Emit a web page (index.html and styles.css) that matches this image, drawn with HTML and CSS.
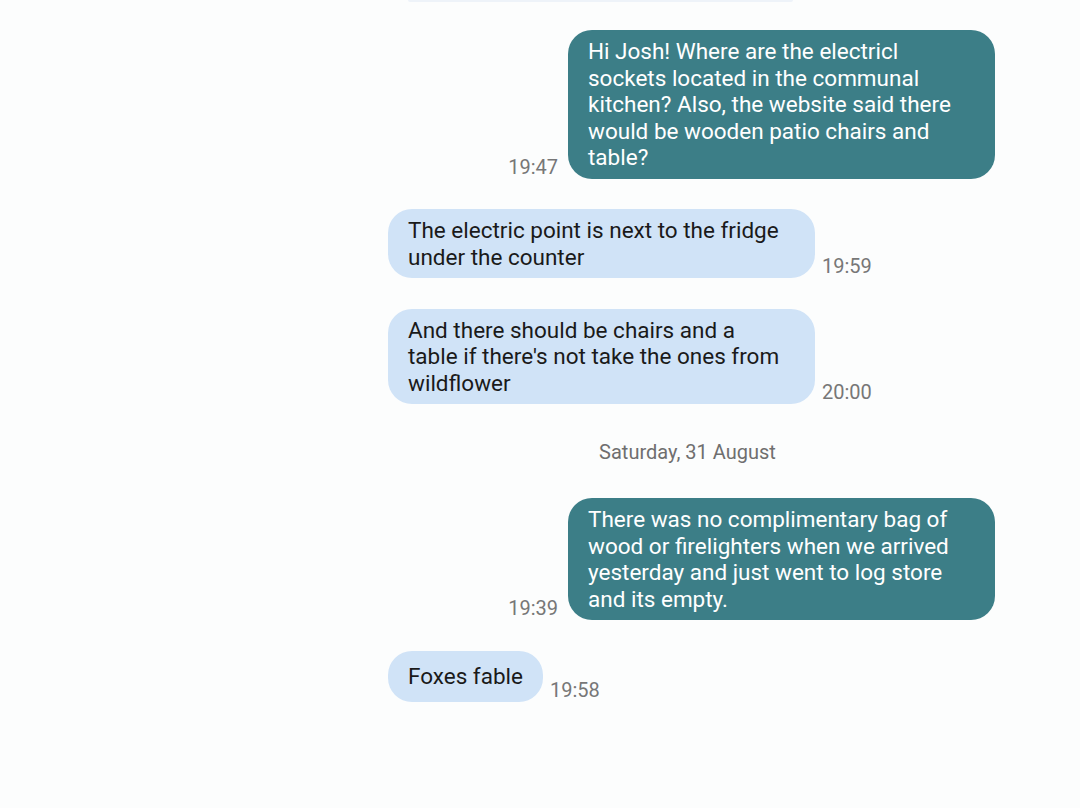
FILE: index.html
```html
<!DOCTYPE html>
<html lang="en">
<head>
<meta charset="utf-8">
<title>Chat</title>
<link rel="stylesheet" href="styles.css">
</head>
<body>
<div class="screen">
  <div class="remnant"></div>
  <div class="chat">
    <div class="row out">
      <span class="time">19:47</span>
      <div class="bubble sent">Hi Josh! Where are the electricl sockets located in the communal kitchen? Also, the website said there would be wooden patio chairs and table?</div>
    </div>
    <div class="row in">
      <div class="bubble recv">The electric point is next to the fridge under the counter</div>
      <span class="time">19:59</span>
    </div>
    <div class="row in">
      <div class="bubble recv">And there should be chairs and a table if there's not take the ones from wildflower</div>
      <span class="time">20:00</span>
    </div>
    <div class="date">Saturday, 31 August</div>
    <div class="row out">
      <span class="time">19:39</span>
      <div class="bubble sent">There was no complimentary bag of wood or firelighters when we arrived yesterday and just went to log store and its empty.</div>
    </div>
    <div class="row in">
      <div class="bubble recv single">Foxes fable</div>
      <span class="time">19:58</span>
    </div>
  </div>
</div>
</body>
</html>
```

FILE: styles.css
```css
html, body {
  margin: 0;
  padding: 0;
  background: #fcfdfd;
}

.screen {
  width: 1080px;
  height: 808px;
  overflow: hidden;
  position: relative;
  font-family: Roboto, "Noto Sans", sans-serif;
}

.remnant {
  position: absolute;
  top: 0;
  left: 408px;
  width: 385px;
  height: 2px;
  background: #eef3f9;
  border-radius: 0 0 2px 2px;
}

.chat {
  display: flex;
  flex-direction: column;
  width: 607px;
  margin-left: 388px;
  padding-top: 30px;
}

.row {
  display: flex;
  align-items: flex-end;
  gap: 7px;
  margin-bottom: 30.5px;
}

.row.out {
  justify-content: flex-end;
  gap: 10px;
}

.bubble {
  box-sizing: border-box;
  max-width: 427px;
  padding: 8px 29px 8px 20px;
  border-radius: 24px;
  font-size: 22.5px;
  line-height: 26.5px;
}

.bubble.sent {
  background: #3c7e87;
  color: #ffffff;
}

.bubble.recv {
  background: #d0e3f7;
  color: #1a1a1a;
}

.bubble.single {
  padding: 12px 20px 12.5px;
}

.time {
  font-size: 20px;
  line-height: 23px;
  color: #777777;
  margin-bottom: 0;
}

.date {
  text-align: center;
  font-size: 20px;
  line-height: 23px;
  color: #6f6f6f;
  margin: 6px 0 34.5px;
  padding-right: 8px;
}
```
